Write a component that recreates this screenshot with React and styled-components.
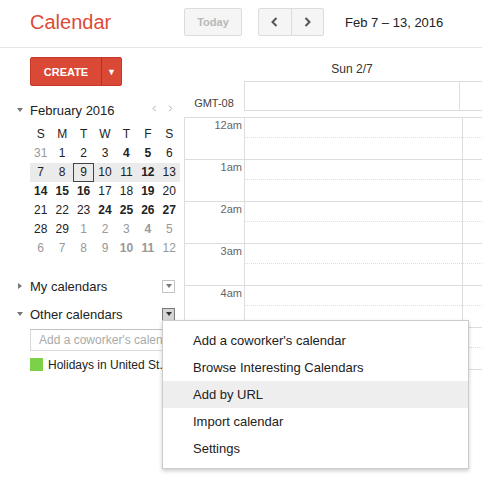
import React from "react"
import styled, { createGlobalStyle } from 'styled-components'

const GlobalStyle = createGlobalStyle`
  html, body {
    margin: 0;
    padding: 0;
  }
  body {
    width: 482px;
    height: 480px;
    overflow: hidden;
    background: #fff;
    font-family: "Liberation Sans", Arial, sans-serif;
    color: #222;
  }
  * {
    box-sizing: border-box;
  }
`

const weeks = [
  [[31, 'o'], [1], [2], [3], [4, 'b'], [5, 'b'], [6]],
  [[7], [8], [9, 't'], [10], [11], [12, 'b'], [13]],
  [[14, 'b'], [15, 'b'], [16, 'b'], [17], [18], [19, 'b'], [20]],
  [[21], [22], [23], [24, 'b'], [25, 'b'], [26, 'b'], [27, 'b']],
  [[28], [29], [1, 'o'], [2, 'o'], [3, 'o'], [4, 'ob'], [5, 'o']],
  [[6, 'o'], [7, 'o'], [8, 'o'], [9, 'o'], [10, 'ob'], [11, 'ob'], [12, 'o']],
]

const hours = ['12am', '1am', '2am', '3am', '4am', '5am']

const menuItems = [
  "Add a coworker's calendar",
  'Browse Interesting Calendars',
  'Add by URL',
  'Import calendar',
  'Settings',
]

const Chevron = ({ dir, size = 10, color = '#555', stroke = 2 }) => (
  <svg width={size * 0.7} height={size} viewBox="0 0 7 10">
    <path
      d={dir === 'left' ? 'M5.5 1 L1.5 5 L5.5 9' : 'M1.5 1 L5.5 5 L1.5 9'}
      fill="none"
      stroke={color}
      strokeWidth={stroke}
    />
  </svg>
)

const App = () => {
  return (
    <Page>
      <GlobalStyle />
      <Header>
        <Logo>Calendar</Logo>
        <TodayButton>Today</TodayButton>
        <NavGroup>
          <NavButton><Chevron dir="left" /></NavButton>
          <NavButton divider><Chevron dir="right" /></NavButton>
        </NavGroup>
        <DateRange>Feb 7 – 13, 2016</DateRange>
      </Header>

      <Body>
        <Sidebar>
          <CreateButton>
            <CreateLabel>CREATE</CreateLabel>
            <CreateArrow>▼</CreateArrow>
          </CreateButton>

          <MonthHeader>
            <Toggle open />
            <MonthTitle>February 2016</MonthTitle>
            <MonthNav><Chevron dir="left" size={7} color="#999" stroke={1.2} /></MonthNav>
            <MonthNav><Chevron dir="right" size={7} color="#999" stroke={1.2} /></MonthNav>
          </MonthHeader>

          <MonthGrid>
            {['S', 'M', 'T', 'W', 'T', 'F', 'S'].map((d, i) => (
              <DayName key={i}>{d}</DayName>
            ))}
            {weeks.map((week, w) => (
              <Week key={w} current={w === 1}>
                {week.map(([n, flags = ''], i) => (
                  <DayNum
                    key={i}
                    other={flags.includes('o')}
                    bold={flags.includes('b')}
                    today={flags.includes('t')}
                  >
                    {n}
                  </DayNum>
                ))}
              </Week>
            ))}
          </MonthGrid>

          <SectionHead first>
            <Toggle />
            <SectionTitle>My calendars</SectionTitle>
            <ListMenuButton />
          </SectionHead>
          <SectionHead>
            <Toggle open />
            <SectionTitle>Other calendars</SectionTitle>
            <ListMenuButton active />
          </SectionHead>

          <CoworkerInput placeholder="Add a coworker's calendar" />

          <CalendarItem>
            <Swatch />
            <span>Holidays in United St.</span>
          </CalendarItem>
        </Sidebar>

        <Main>
          <DayHeadRow>
            <DayHead>Sun 2/7</DayHead>
          </DayHeadRow>
          <AllDayRow>
            <ZoneLabel>GMT-08</ZoneLabel>
            <AllDayBox>
              <AllDayCell />
              <AllDayCell />
            </AllDayBox>
          </AllDayRow>
          <HourGrid>
            {hours.map((h) => (
              <HourRow key={h}>
                <TimeCell>{h}</TimeCell>
                <DayCell><HalfHour /></DayCell>
                <DayCell><HalfHour /></DayCell>
              </HourRow>
            ))}
          </HourGrid>
        </Main>
      </Body>

      <Menu>
        {menuItems.map((item) => (
          <MenuItem key={item} active={item === 'Add by URL'}>{item}</MenuItem>
        ))}
      </Menu>
    </Page>
  )
}

const Page = styled.div`
  position: relative;
  width: 482px;
  height: 480px;
  overflow: hidden;
`

const Header = styled.header`
  display: flex;
  align-items: center;
  height: 48px;
  padding-bottom: 3px;
  border-bottom: 1px solid #e5e5e5;
`

const Logo = styled.div`
  width: 184px;
  flex: none;
  padding: 1px 0 0 30px;
  font-size: 20px;
  color: #dd4b39;
`

const TodayButton = styled.div`
  width: 58px;
  height: 28px;
  flex: none;
  display: flex;
  align-items: center;
  justify-content: center;
  margin-right: 16px;
  background: #f5f5f5;
  border: 1px solid #dcdcdc;
  border-radius: 2px;
  font-size: 11px;
  font-weight: bold;
  color: #b8b8b8;
`

const NavGroup = styled.div`
  display: flex;
  width: 66px;
  height: 28px;
  flex: none;
  background: #f5f5f5;
  border: 1px solid #dcdcdc;
  border-radius: 2px;
`

const NavButton = styled.div`
  flex: 1;
  display: flex;
  align-items: center;
  justify-content: center;
  border-left: ${(p) => (p.divider ? '1px solid #dcdcdc' : 'none')};
`

const DateRange = styled.div`
  margin-left: 21px;
  font-size: 13px;
  color: #222;
  white-space: nowrap;
`

const Body = styled.div`
  display: flex;
`

const Sidebar = styled.aside`
  width: 184px;
  flex: none;
  padding: 0 9px 0 30px;
`

const CreateButton = styled.div`
  display: flex;
  width: 92px;
  height: 29px;
  margin-top: 9px;
  background: #d94936;
  border: 1px solid #c53727;
  border-radius: 2px;
  color: #fff;
  font-weight: bold;
`

const CreateLabel = styled.div`
  width: 70px;
  display: flex;
  align-items: center;
  justify-content: center;
  font-size: 11px;
`

const CreateArrow = styled.div`
  flex: 1;
  display: flex;
  align-items: center;
  justify-content: center;
  border-left: 1px solid #b8301f;
  font-size: 9px;
`

const Toggle = styled.div`
  width: 12px;
  flex: none;
  margin-left: -16px;
  margin-right: 4px;
  display: flex;
  justify-content: center;
  align-items: center;

  &::before {
    content: '';
    border-style: solid;
    border-color: transparent;
    ${(p) =>
      p.open
        ? 'border-width: 4px 3.5px 0 3.5px; border-top-color: #777;'
        : 'border-width: 3.5px 0 3.5px 4px; border-left-color: #777;'}
  }
`

const MonthHeader = styled.div`
  display: flex;
  align-items: center;
  width: 150px;
  height: 20px;
  margin-top: 14px;
  padding-right: 2px;
`

const MonthTitle = styled.div`
  flex: 1;
  font-size: 13px;
`

const MonthNav = styled.div`
  width: 16px;
  display: flex;
  justify-content: center;
  margin-top: -4px;
`

const MonthGrid = styled.div`
  width: 150px;
  margin-top: 5px;
  display: grid;
  grid-template-columns: repeat(7, 1fr);
`

const DayName = styled.div`
  height: 19px;
  line-height: 19px;
  text-align: center;
  font-size: 12px;
  color: #222;
`

const Week = styled.div`
  grid-column: 1 / -1;
  display: grid;
  grid-template-columns: repeat(7, 1fr);
  background: ${(p) => (p.current ? '#ebebeb' : 'transparent')};
`

const DayNum = styled.div`
  height: 19px;
  line-height: 17px;
  text-align: center;
  font-size: 12px;
  font-weight: ${(p) => (p.bold ? 'bold' : 'normal')};
  color: ${(p) => (p.other ? '#999' : '#222')};
  border: 1px solid ${(p) => (p.today ? '#444' : 'transparent')};
`

const SectionHead = styled.div`
  display: flex;
  align-items: center;
  height: 20px;
  margin-top: ${(p) => (p.first ? '18px' : '8px')};
`

const SectionTitle = styled.div`
  flex: 1;
  font-size: 13px;
  color: #222;
`

const ListMenuButton = styled.div`
  width: 13px;
  height: 13px;
  display: flex;
  align-items: center;
  justify-content: center;
  background: ${(p) => (p.active ? '#d5d5d5' : '#fff')};
  border: 1px solid ${(p) => (p.active ? '#7a7a7a' : '#c4c4c4')};

  &::before {
    content: '';
    border-style: solid;
    border-color: transparent;
    border-width: 4px 3.5px 0 3.5px;
    border-top-color: ${(p) => (p.active ? '#333' : '#777')};
  }
`

const CoworkerInput = styled.input`
  display: block;
  width: 145px;
  height: 22px;
  margin-top: 5px;
  padding: 0 0 0 8px;
  border: 1px solid #d9d9d9;
  border-top-color: #c0c0c0;
  font-family: inherit;
  font-size: 12px;
  outline: none;

  &::placeholder {
    color: #aaa;
  }
`

const CalendarItem = styled.div`
  display: flex;
  align-items: center;
  gap: 5px;
  height: 13px;
  margin-top: 7px;
  font-size: 12px;
  white-space: nowrap;
`

const Swatch = styled.div`
  width: 13px;
  height: 13px;
  flex: none;
  background: #7bd148;
`

const Main = styled.div`
  flex: 1;
  min-width: 0;
  overflow: hidden;
`

const DayHeadRow = styled.div`
  display: flex;
  align-items: flex-end;
  height: 33px;
  padding-left: 60px;
`

const DayHead = styled.div`
  width: 216px;
  flex: none;
  padding-bottom: 5px;
  text-align: center;
  font-size: 12px;
  line-height: 14px;
  color: #333;
`

const AllDayRow = styled.div`
  display: flex;
  height: 30px;
`

const ZoneLabel = styled.div`
  width: 60px;
  flex: none;
  align-self: flex-end;
  padding-bottom: 1px;
  text-align: center;
  font-size: 11px;
  line-height: 13px;
  color: #444;
`

const AllDayBox = styled.div`
  display: flex;
  flex: none;
  border: 1px solid #ddd;
`

const AllDayCell = styled.div`
  width: 215px;
  flex: none;
  border-right: 1px solid #ddd;
`

const HourGrid = styled.div`
  margin-top: 6px;
  width: 500px;
  border-top: 1px solid #ddd;
`

const HourRow = styled.div`
  display: grid;
  grid-template-columns: 61px 218px 218px;
  height: 42px;
  border-bottom: 1px solid #ddd;
`

const TimeCell = styled.div`
  padding: 1px 2px 0 0;
  text-align: right;
  font-size: 11px;
  line-height: 13px;
  color: #666;
  border-left: 1px solid #ddd;
  border-right: 1px solid #ddd;
`

const DayCell = styled.div`
  border-right: 1px solid #ddd;
`

const HalfHour = styled.div`
  height: 20px;
  border-bottom: 1px dotted #ddd;
`

const Menu = styled.div`
  position: absolute;
  left: 162px;
  top: 320px;
  width: 307px;
  padding: 6px 0;
  background: #fff;
  border: 1px solid rgba(0, 0, 0, 0.2);
  box-shadow: 0 2px 4px rgba(0, 0, 0, 0.2);
`

const MenuItem = styled.div`
  height: 27px;
  line-height: 27px;
  padding-left: 30px;
  font-size: 13px;
  color: #222;
  background: ${(p) => (p.active ? '#eee' : 'transparent')};
`

export default App
